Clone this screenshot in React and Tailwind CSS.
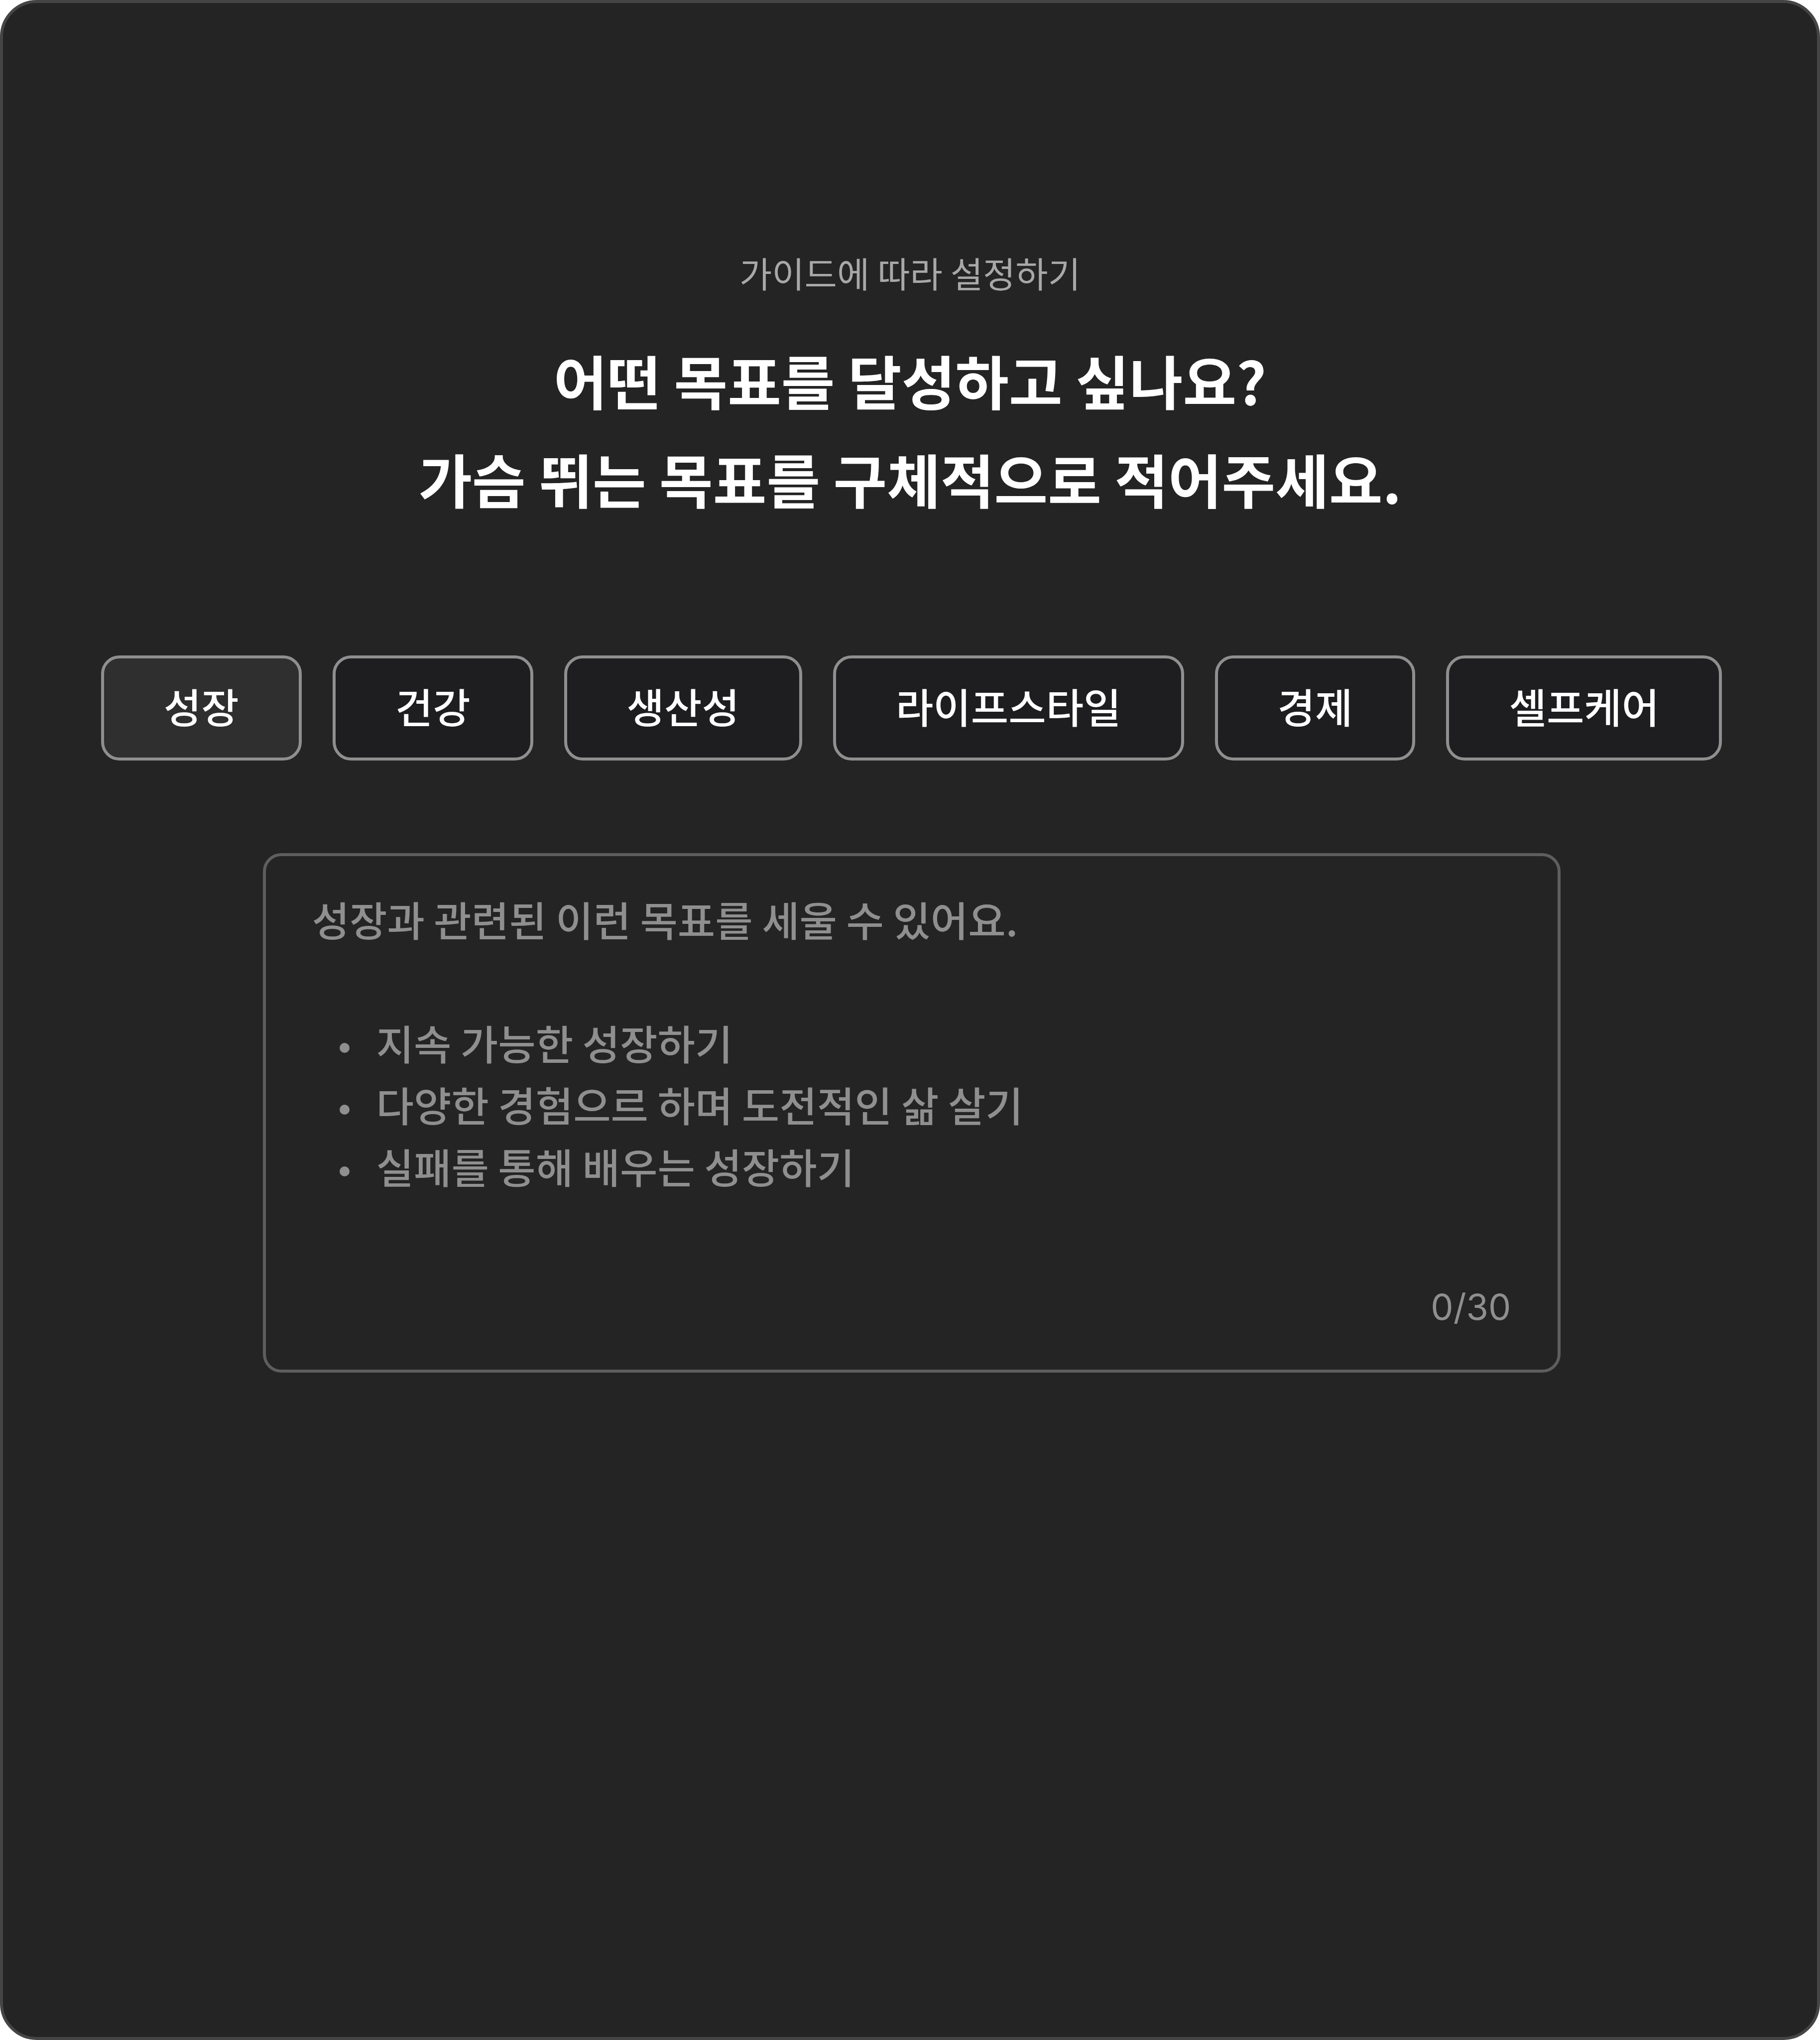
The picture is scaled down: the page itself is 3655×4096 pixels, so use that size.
import { useState } from "react";

const CATEGORIES = ["성장", "건강", "생산성", "라이프스타일", "경제", "셀프케어"];

const EXAMPLES = [
  "지속 가능한 성장하기",
  "다양한 경험으르 하며 도전적인 삶 살기",
  "실패를 통해 배우는 성장하기",
];

const MAX_LENGTH = 30;

function CategoryButton({ label, selected, onSelect }) {
  return (
    <button
      type="button"
      aria-pressed={selected}
      onClick={onSelect}
      className={`rounded-[37px] border-[6px] border-[#8f8f8f] px-[120px] pt-[35px] pb-[45px] text-[82px] leading-[119px] font-medium whitespace-nowrap text-white ${
        selected ? "bg-[#2f2f2f]" : "bg-[#1e1e20]"
      }`}
    >
      {label}
    </button>
  );
}

function GoalField({ category }) {
  const [goal, setGoal] = useState("");
  return (
    <div className="relative flex min-h-[1043px] w-full max-w-[2606px] flex-col justify-between rounded-[37px] border-[6px] border-[#5e5e5e] px-[93px] pt-[64px] pb-[64px] text-[82px] leading-[124px] text-[#8f8f8f]">
      <label htmlFor="goal" className={goal ? "invisible" : "font-medium"}>
        <span className="block">{category}과 관련된 이런 목표를 세울 수 있어요.</span>
        <span className="mt-[124px] block">
          {EXAMPLES.map((example) => (
            <span key={example} className="flex items-center">
              <span className="mt-[21px] mr-[54px] ml-[55px] size-[20px] rounded-full bg-[#8f8f8f]" />
              {example}
            </span>
          ))}
        </span>
      </label>
      <output htmlFor="goal" className="self-end font-['Inter',sans-serif] text-[72px] leading-[124px]">
        {goal.length}/{MAX_LENGTH}
      </output>
      <textarea
        id="goal"
        value={goal}
        maxLength={MAX_LENGTH}
        onChange={(event) => setGoal(event.target.value)}
        className="absolute inset-0 resize-none bg-transparent px-[93px] pt-[64px] pb-[188px] text-white outline-none"
      />
    </div>
  );
}

export default function App() {
  const [selected, setSelected] = useState(CATEGORIES[0]);
  return (
    <div className="min-h-screen bg-white font-['Noto_Sans_CJK_KR',sans-serif]">
      <main className="flex min-h-screen flex-col items-center rounded-[74px] border-[6px] border-[#454545] bg-[#242424] pt-[478px]">
        <p className="text-[71px] leading-[124px] text-[#a8a8a8]">가이드에 따라 설정하기</p>
        <h1 className="mt-[55px] text-center text-[117px] leading-[198px] font-semibold text-white">
          어떤 목표를 달성하고 싶나요?
          <br />
          가슴 뛰는 목표를 구체적으로 적어주세요.
        </h1>
        <div className="mt-[257px] flex w-full flex-col items-center gap-[186px] pl-[6px]">
          <div role="group" aria-label="목표 분야" className="flex flex-wrap justify-center gap-[62px]">
            {CATEGORIES.map((name) => (
              <CategoryButton
                key={name}
                label={name}
                selected={name === selected}
                onSelect={() => setSelected(name)}
              />
            ))}
          </div>
          <GoalField category={selected} />
        </div>
      </main>
    </div>
  );
}
